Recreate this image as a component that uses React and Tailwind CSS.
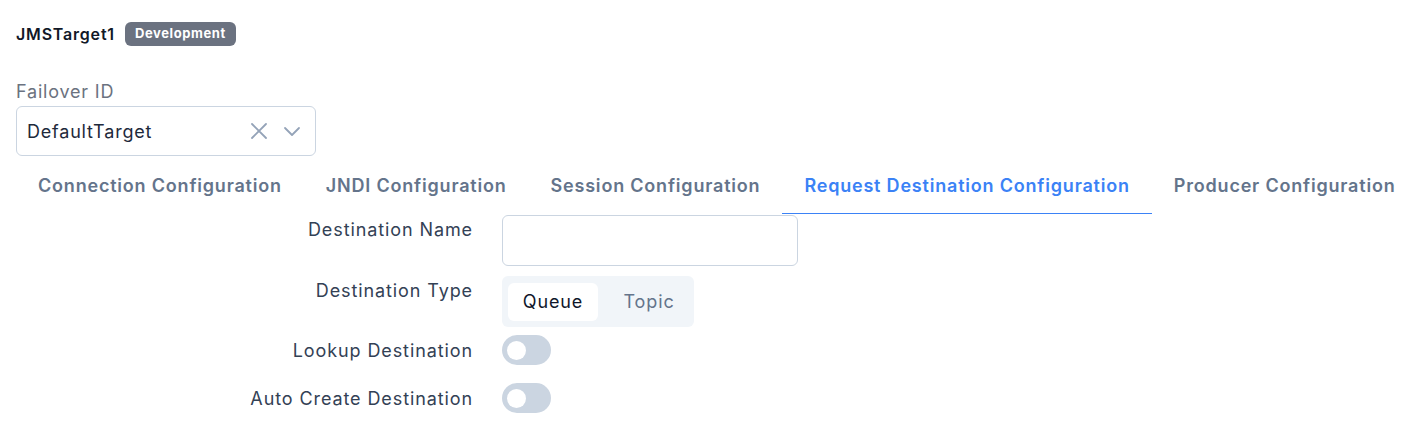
import React from "react";

const font = { fontFamily: "Inter, 'Noto Sans', sans-serif" };

function Toggle() {
  return (
    <div className="w-[49px] h-[30px] rounded-full bg-[#cbd5e1] flex items-center px-[5px]">
      <div className="w-[19px] h-[19px] rounded-full bg-white" />
    </div>
  );
}

export default function App() {
  const tabs = [
    "Connection Configuration",
    "JNDI Configuration",
    "Session Configuration",
    "Request Destination Configuration",
    "Producer Configuration",
  ];
  return (
    <div className="bg-white w-[1423px] h-[440px] px-4 pt-[22px] text-[#1e293b]" style={font}>
      <div className="flex items-center gap-[10px] h-[24px]">
        <span className="text-[16px] font-semibold text-[#111827] tracking-[0.8px]">JMSTarget1</span>
        <span className="h-[24px] px-[10px] rounded-md bg-[#6b7280] text-white text-[13px] font-bold tracking-[0.6px] flex items-center">Development</span>
      </div>
      <div className="mt-[34px] text-[18px] leading-[24px] text-[#6b7280] tracking-[0.8px]">Failover ID</div>
      <div className="mt-[2px] w-[300px] h-[50px] border border-[#cbd5e1] rounded-md flex items-center pl-[10px] pr-[14px]">
        <span className="flex-1 text-[18px] text-[#1e293b] tracking-[0.8px]">DefaultTarget</span>
        <svg width="20" height="20" viewBox="0 0 20 20" className="mr-[14px]" fill="none" stroke="#94a3b8" strokeWidth="1.8" strokeLinecap="round">
          <path d="M3 3 L17 17 M17 3 L3 17" />
        </svg>
        <svg width="18" height="18" viewBox="0 0 18 18" fill="none" stroke="#94a3b8" strokeWidth="1.8" strokeLinecap="round" strokeLinejoin="round">
          <path d="M2 6 L9 13 L16 6" />
        </svg>
      </div>
      <div className="flex mt-[2px] h-[56px]">
        {tabs.map((t, i) => (
          <div
            key={t}
            className={
              "px-[22px] flex items-center text-[18px] font-semibold whitespace-nowrap tracking-[0.8px] " +
              (i === 3 ? "text-[#3b82f6] border-b border-[#3b82f6]" : "text-[#64748b] border-b border-transparent")
            }
          >
            {t}
          </div>
        ))}
      </div>
      <div className="grid grid-cols-[457px_1fr] gap-x-[29px] mt-[1px] text-[18px] text-[#334155] tracking-[0.9px]">
        <div className="text-right pt-[3px] leading-[24px]">Destination Name</div>
        <div>
          <div className="w-[296px] h-[51px] border border-[#cbd5e1] rounded-md" />
        </div>
        <div className="text-right pt-[3px] mt-[10px] leading-[24px]">Destination Type</div>
        <div className="mt-[10px]">
          <div className="inline-flex items-center h-[51px] w-[192px] rounded-md bg-[#f1f5f9] p-[6px]">
            <div className="w-[90px] h-[38px] rounded-md bg-white flex items-center justify-center text-[#0f172a]">Queue</div>
            <div className="flex-1 pl-[12px] flex items-center justify-center text-[#64748b]">Topic</div>
          </div>
        </div>
        <div className="text-right mt-[8px] h-[30px] flex items-center justify-end">Lookup Destination</div>
        <div className="mt-[8px]"><Toggle /></div>
        <div className="text-right mt-[18px] h-[30px] flex items-center justify-end">Auto Create Destination</div>
        <div className="mt-[18px]"><Toggle /></div>
      </div>
    </div>
  );
}
